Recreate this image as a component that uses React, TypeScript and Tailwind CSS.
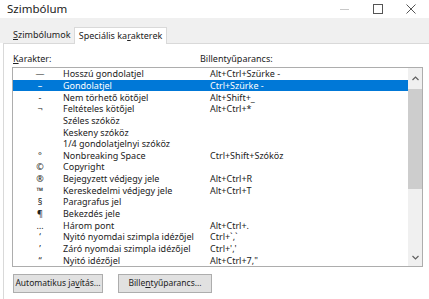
import React from 'react';

type Row = { sym: string; name: string; keys: string };

const rows: Row[] = [
  { sym: '—', name: 'Hosszú gondolatjel', keys: 'Alt+Ctrl+Szürke -' },
  { sym: '–', name: 'Gondolatjel', keys: 'Ctrl+Szürke -' },
  { sym: '-', name: 'Nem törhető kötőjel', keys: 'Alt+Shift+_' },
  { sym: '¬', name: 'Feltételes kötőjel', keys: 'Alt+Ctrl+*' },
  { sym: '', name: 'Széles szóköz', keys: '' },
  { sym: '', name: 'Keskeny szóköz', keys: '' },
  { sym: '', name: '1/4 gondolatjelnyi szóköz', keys: '' },
  { sym: '°', name: 'Nonbreaking Space', keys: 'Ctrl+Shift+Szóköz' },
  { sym: '©', name: 'Copyright', keys: '' },
  { sym: '®', name: 'Bejegyzett védjegy jele', keys: 'Alt+Ctrl+R' },
  { sym: '™', name: 'Kereskedelmi védjegy jele', keys: 'Alt+Ctrl+T' },
  { sym: '§', name: 'Paragrafus jel', keys: '' },
  { sym: '¶', name: 'Bekezdés jele', keys: '' },
  { sym: '…', name: 'Három pont', keys: 'Alt+Ctrl+.' },
  { sym: '‘', name: 'Nyitó nyomdai szimpla idézőjel', keys: 'Ctrl+`,`' },
  { sym: '’', name: 'Záró nyomdai szimpla idézőjel', keys: "Ctrl+','" },
  { sym: '“', name: 'Nyitó idézőjel', keys: 'Alt+Ctrl+7,"' },
];

const App: React.FC = () => {
  const selected = 1;

  return (
    <div className="w-[429px] h-[299px] bg-white overflow-hidden flex flex-col text-[#222] font-['Noto_Sans',sans-serif]">
      {/* title bar */}
      <div className="h-[18px] flex items-center justify-between pl-[7px] shrink-0">
        <span className="text-[11.5px] leading-none text-[#222]">Szimbólum</span>
        <div className="flex items-center h-full">
          <div className="w-[34px] flex justify-center">
            <div className="w-[9px] h-px bg-[#c8c8c8]" />
          </div>
          <div className="w-[34px] flex justify-center">
            <div className="w-[10px] h-[10px] border border-[#555]" />
          </div>
          <div className="w-[34px] flex justify-center pr-[2px]">
            <svg width="10" height="10" viewBox="0 0 10 10">
              <path d="M0.5 0.5 L9.5 9.5 M9.5 0.5 L0.5 9.5" stroke="#555" strokeWidth="1" />
            </svg>
          </div>
        </div>
      </div>

      {/* tab strip */}
      <div className="h-[25px] bg-[#f0f0f0] flex items-end pl-[3px] shrink-0 text-[9px]">
        <div className="h-[16px] w-[71px] flex items-center pl-[10px]">
          <span><span className="underline">S</span>zimbólumok</span>
        </div>
        <div className="h-[17px] w-[93px] bg-white border border-b-0 border-[#d9d9d9] flex items-center justify-center -mb-px relative">
          <span>Speciális ka<span className="underline">r</span>akterek</span>
        </div>
      </div>

      {/* panel */}
      <div className="flex-1 bg-white border-l border-t border-[#d9d9d9] ml-[3px] pl-[8px] pr-[6px] flex flex-col text-[9px]">
        <div className="flex h-[23px] items-center pt-[6px]">
          <span className="w-[188px] pl-px"><span className="underline">K</span>arakter:</span>
          <span>Billentyűparancs:</span>
        </div>

        <div className="h-[200px] border border-[#adadad] flex">
          <div className="flex-1 flex flex-col">
            {rows.map((r, i) => (
              <div
                key={i}
                className={`h-[11.7px] flex items-center leading-none ${i === selected ? 'bg-[#0078d7] text-white' : ''}`}
              >
                <span className="w-[50px] pl-[4px] text-center">{r.sym}</span>
                <span className="w-[147px] whitespace-nowrap">{r.name}</span>
                <span className="whitespace-nowrap">{r.keys}</span>
              </div>
            ))}
          </div>
          <div className="w-[14px] bg-[#f0f0f0] flex flex-col">
            <div className="h-[20px] flex items-center justify-center">
              <svg width="7" height="5" viewBox="0 0 7 5">
                <path d="M0.5 4 L3.5 1 L6.5 4" fill="none" stroke="#606060" strokeWidth="1.2" />
              </svg>
            </div>
            <div className="h-[100px] bg-[#cdcdcd] mt-px" />
            <div className="flex-1" />
            <div className="h-[18px] flex items-center justify-center">
              <svg width="7" height="5" viewBox="0 0 7 5">
                <path d="M0.5 1 L3.5 4 L6.5 1" fill="none" stroke="#606060" strokeWidth="1.2" />
              </svg>
            </div>
          </div>
        </div>

        <div className="flex gap-[15px] mt-[7px] pl-px">
          <button className="w-[90px] h-[19px] bg-[#e1e1e1] border border-[#adadad] text-[8.5px] leading-none whitespace-nowrap">
            Automatikus ja<span className="underline">v</span>ítás...
          </button>
          <button className="w-[94px] h-[19px] bg-[#e1e1e1] border border-[#adadad] text-[8.5px] leading-none whitespace-nowrap">
            Bille<span className="underline">n</span>tyűparancs...
          </button>
        </div>
      </div>
    </div>
  );
};

export default App;
